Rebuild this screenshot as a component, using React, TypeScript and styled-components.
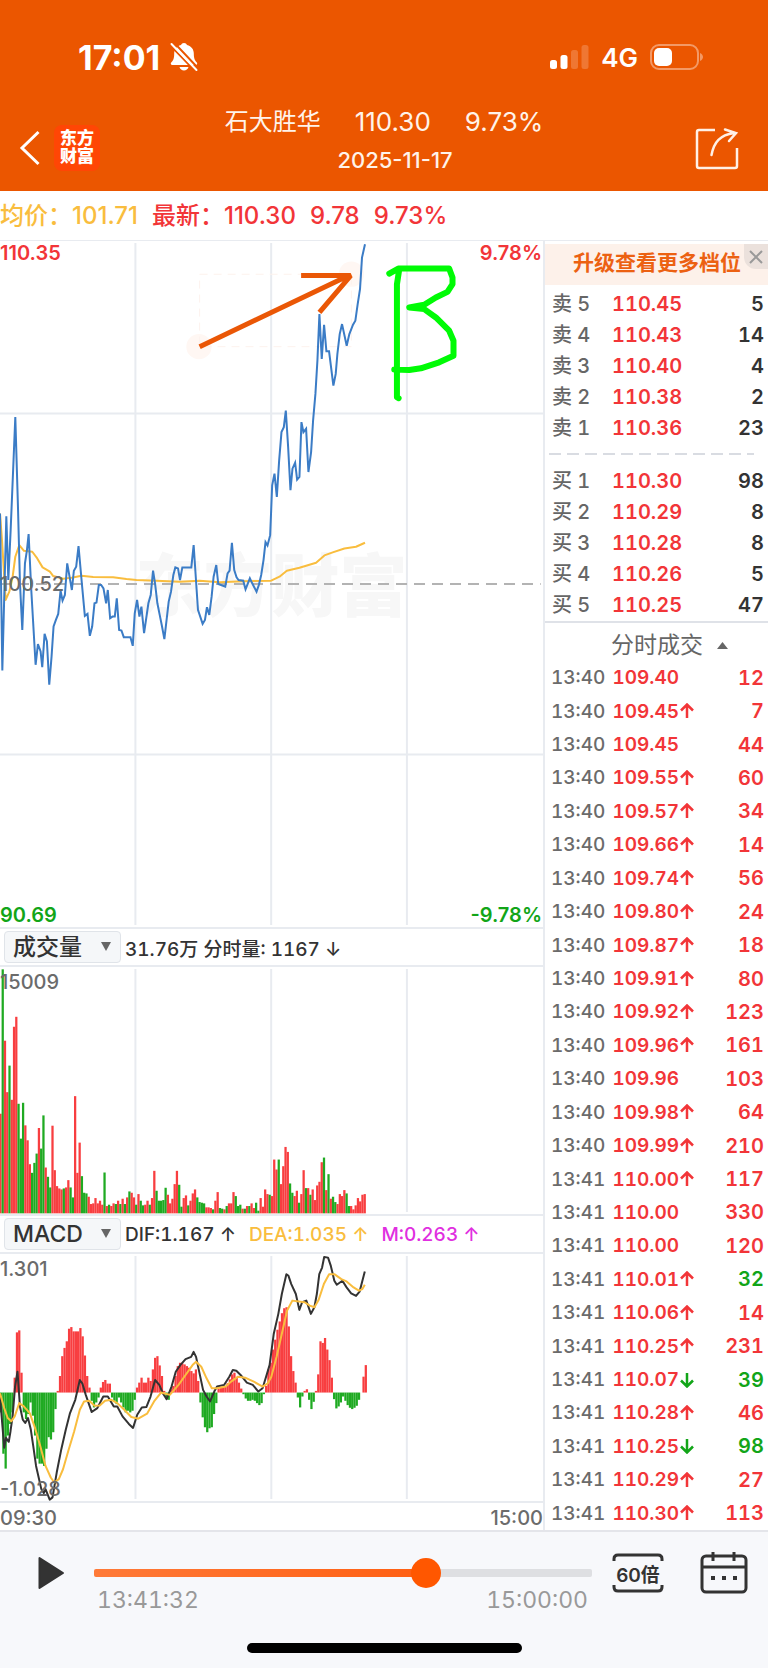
import React, { useState } from "react";
import styled, { createGlobalStyle } from "styled-components";

const GlobalStyle = createGlobalStyle`
  *, *::before, *::after { box-sizing: border-box; }
  body {
    margin: 0;
    background: #fff;
    color: #333;
    font-family: Inter, "Noto Sans CJK SC", sans-serif;
  }
  button, select { font: inherit; color: inherit; }
  button { display: flex; padding: 0; border: 0; background: none; cursor: pointer; }
`;

const RED = "#f23538";
const GREEN = "#12a518";
const YELLOW = "#f9bd3e";
const LINE = "#e8ebf0";

const Page = styled.div`
  display: flex;
  flex-direction: column;
  min-height: 100vh;
`;

/* ---------- header ---------- */

const Header = styled.header`
  padding-top: 36px;
  background: #eb5600;
  color: #fff;
`;

const StatusBar = styled.div`
  display: flex;
  align-items: center;
  justify-content: space-between;
  height: 42px;
  padding: 0 64px 0 78px;
`;

const StatusGroup = styled.div`
  display: flex;
  align-items: center;
  gap: 12px;
`;

const Clock = styled.span`
  display: flex;
  align-items: center;
  gap: 10px;
  font-size: 34px;
  font-weight: 700;
`;

const Network = styled.span`
  font-size: 26px;
  font-weight: 600;
`;

const NavBar = styled.div`
  display: grid;
  grid-template-columns: 1fr auto 1fr;
  align-items: center;
  height: 113px;
  padding: 0 29px 0 18px;
`;

const NavStart = styled.div`
  display: flex;
  align-items: center;
  gap: 12px;
  padding-top: 26px;
`;

const NavEnd = styled.div`
  display: flex;
  justify-content: flex-end;
  padding-top: 26px;
`;

const AppLogo = styled.span`
  width: 46px;
  height: 46px;
  padding-top: 4px;
  border-radius: 8px;
  background: #ff4605;
  font-size: 17px;
  font-weight: 900;
  line-height: 18px;
  text-align: center;
`;

const Titles = styled.div`
  display: flex;
  flex-direction: column;
  align-items: center;
  gap: 8px;
  padding: 10px 0 0 11px;
`;

const StockTitle = styled.h1`
  display: flex;
  gap: 34px;
  margin: 0;
  color: #fff3ea;
  font-size: 26px;
  font-weight: 400;
  line-height: 32px;
`;

const StockName = styled.span`
  font-size: 24px;
`;

const TradeDate = styled.div`
  padding-left: 22px;
  color: #fff3ea;
  font-size: 22px;
  font-weight: 500;
  line-height: 28px;
`;

/* ---------- quote summary ---------- */

const Summary = styled.div`
  display: flex;
  gap: 14px;
  height: 49px;
  color: ${RED};
  font-size: 24px;
  font-weight: 500;
  line-height: 49px;
`;

const Average = styled.span`
  color: ${YELLOW};
`;

/* ---------- body ---------- */

const Body = styled.main`
  display: flex;
  border-top: 1px solid ${LINE};
  border-bottom: 2px solid #e4e5ea;
`;

const Charts = styled.section`
  display: flex;
  flex: 1;
  flex-direction: column;
  min-width: 0;
`;

const Plot = styled.div<{ $height: number }>`
  position: relative;
  height: ${(p) => p.$height}px;
  border-bottom: 2px solid ${LINE};
`;

const Drawing = styled.svg`
  display: block;
  position: relative;
  width: 100%;
  height: 100%;
  overflow: hidden;

  path, line, rect, polyline { vector-effect: non-scaling-stroke; }
`;

const ScaleLabel = styled.span<{ $tone?: string; $right?: boolean; $at: string }>`
  position: absolute;
  ${(p) => (p.$right ? "right: 1px;" : "left: 0;")}
  ${(p) => p.$at};
  color: ${(p) => p.$tone ?? "#6b6b6b"};
  font-size: 20px;
  font-weight: ${(p) => (p.$tone ? 600 : 500)};
  line-height: 24px;
`;

const Watermark = styled.span`
  position: absolute;
  top: 50%;
  left: 0;
  width: 100%;
  color: #f7f7f7;
  font-size: 68px;
  font-weight: 900;
  line-height: 80px;
  text-align: center;
  margin-top: -38px;
`;

const IndicatorBar = styled.div`
  display: flex;
  align-items: center;
  gap: 4px;
  height: 38px;
  padding-left: 4px;
  border-bottom: 2px solid ${LINE};
`;

const Picker = styled.label`
  display: block;
  position: relative;
  width: 117px;
  height: 32px;
  color: #666;
`;

const PickerSelect = styled.select`
  width: 100%;
  height: 100%;
  padding: 0 0 0 8px;
  border: 1px solid #e0e4e9;
  border-radius: 4px;
  background: #f5f7f9;
  color: #333;
  font-size: 23px;
  font-weight: 500;
  appearance: none;
`;

const PickerArrow = styled.svg`
  position: absolute;
  top: 11px;
  right: 10px;
  pointer-events: none;
`;

const Readings = styled.div`
  display: flex;
  gap: 13px;
  font-size: 19px;
  font-variant-numeric: tabular-nums;
  font-weight: 500;
`;

const Reading = styled.span<{ $tone?: string }>`
  color: ${(p) => p.$tone ?? "#333"};
`;

const TimeAxis = styled.div`
  display: flex;
  justify-content: space-between;
  height: 27px;
  color: #6b6b6b;
  font-size: 20px;
  font-weight: 500;
  line-height: 31px;
`;

/* ---------- order book ---------- */

const Side = styled.aside`
  display: flex;
  flex: none;
  flex-direction: column;
  width: 225px;
  border-left: 2px solid ${LINE};
`;

const Banner = styled.div`
  position: relative;
  margin-top: 3px;
  height: 41px;
  background: #fdf1ea;
  color: #ec6112;
`;

const BannerLink = styled.a`
  display: block;
  padding-left: 28px;
  color: inherit;
  font-size: 21px;
  font-weight: 600;
  line-height: 38px;
  text-decoration: none;
`;

const CloseButton = styled.button`
  position: absolute;
  top: 0;
  right: 0;
  align-items: center;
  justify-content: center;
  width: 24px;
  height: 25px;
  border-bottom-left-radius: 12px;
  background: #ebe1dc;
  color: #999;
`;

const DataTable = styled.table`
  display: block;
  width: 100%;
  font-size: 20px;
  font-variant-numeric: tabular-nums;
  font-weight: 600;

  tbody { display: flex; flex-direction: column; }
`;

const DepthTable = styled(DataTable)`
  padding: 4px 4px 0 7px;
`;

const DepthRow = styled.tr`
  display: flex;
  height: 31px;
  line-height: 31px;

  th { width: 60px; padding: 0; color: #666; font-weight: 500; text-align: left; }
  td { padding: 0; }
  td:last-child { flex: 1; color: #333; text-align: right; }
`;

const Price = styled.td`
  color: ${RED};
`;

const Divider = styled.svg`
  display: block;
  width: 100%;
  height: 18px;
  padding: 0 14px 0 4px;
`;

const TicksTitle = styled.button`
  align-items: center;
  justify-content: center;
  gap: 14px;
  height: 40px;
  padding: 6px 0 0 26px;
  border-top: 2px solid #dfe2e8;
  color: #666;
  font-size: 23px;
  line-height: 30px;
`;

const TickTable = styled(DataTable)`
  display: flex;
  flex: 1;
  flex-direction: column;
  padding: 0 4px 0 6px;

  tbody { flex: 1; }
`;

const TickRow = styled.tr`
  display: flex;
  flex: 1;
  align-items: center;
  min-height: 24px;

  th, td { padding: 0; }
  th { width: 57px; color: #6b6b6b; font-size: 19px; font-weight: 500; text-align: left; }
`;

const TickPrice = styled.td`
  display: flex;
  justify-content: flex-end;
  width: 71px;
  color: ${RED};
  font-size: 19px;
`;

const TickArrow = styled.td<{ $down?: boolean }>`
  display: flex;
  width: 16px;
  color: ${(p) => (p.$down ? GREEN : RED)};
`;

const TickVolume = styled.td<{ $sell?: boolean }>`
  flex: 1;
  color: ${(p) => (p.$sell ? GREEN : RED)};
  text-align: right;
`;

/* ---------- playback ---------- */

const Player = styled.footer`
  display: flex;
  flex: 1;
  flex-direction: column;
  align-items: center;
  justify-content: space-between;
  padding: 20px 20px 15px 38px;
  background: #f7f8fb;
`;

const Controls = styled.div`
  display: flex;
  gap: 20px;
  width: 100%;
`;

const PlayButton = styled.button`
  align-items: center;
  width: 36px;
  height: 42px;
  color: #333;
`;

const Timeline = styled.div`
  flex: 1;
  min-width: 0;
`;

const Scrubber = styled.input<{ $progress: number }>`
  display: block;
  width: 100%;
  height: 42px;
  margin: 0;
  background: none;
  appearance: none;

  &::-webkit-slider-runnable-track {
    height: 8px;
    border-radius: 2px;
    background: linear-gradient(90deg, #ff7a38, #ff5f12) 0 0 / ${(p) => p.$progress}% 100% no-repeat, #dedfe2;
  }
  &::-webkit-slider-thumb {
    width: 30px;
    height: 30px;
    margin-top: -11px;
    border-radius: 50%;
    background: #ff5700;
    appearance: none;
  }
`;

const TimeRange = styled.div`
  display: flex;
  justify-content: space-between;
  padding: 0 4px 0 3px;
  color: #999;
  font-size: 23px;
  font-variant-numeric: tabular-nums;
  line-height: 28px;
  margin-top: -8px;
`;

const Tools = styled.div`
  display: flex;
  gap: 36px;
  height: 42px;
  align-items: center;
`;

const SpeedButton = styled.button`
  position: relative;
  align-items: center;
  justify-content: center;
  width: 52px;
  height: 40px;
  font-size: 19px;
  font-weight: 600;

  svg { position: absolute; top: 0; left: 0; }
`;

const HomeIndicator = styled.div`
  width: 275px;
  height: 10px;
  margin-right: 18px;
  border-radius: 5px;
  background: #000;
`;

/* ---------- data ---------- */

const priceLine =
  "0,850 7,1322 19,858 25,1050 32,900 46,560 54,830 60,1060 67,1200 75,1000 81,960 86,912 94,1080 107,1305 114,1243 122,1265 127,1312 134,1212 141,1235 148,1365 155,1280 161,1190 168,1170 175,1152 182,1082 188,1112 195,1095 202,1000 209,1040 216,1080 222,1022 229,1010 236,948 246,1060 255,1158 263,1152 270,1218 277,1190 284,1120 290,1118 297,1065 304,1065 311,1075 319,1120 324,1080 331,1165 338,1160 345,1160 351,1105 358,1200 365,1202 372,1222 392,1222 399,1248 405,1150 412,1110 419,1160 425,1130 433,1210 446,1120 453,1095 460,1022 466,1060 473,1120 480,1155 487,1190 494,1228 507,1115 514,1085 521,1035 527,1012 535,1015 541,1050 548,1012 575,1012 582,945 589,1050 595,1140 609,1182 616,1170 622,1132 629,1155 636,1100 642,1040 650,1005 656,1062 677,1070 684,1030 690,1022 697,938 704,1020 711,1042 717,1050 731,1052 738,1078 751,1045 758,1060 771,1085 778,1065 785,1035 792,990 798,936 804,946 812,915 818,765 825,730 832,800 839,690 846,605 853,590 859,540 866,650 873,780 879,715 887,697 893,748 900,740 906,575 912,605 920,595 927,725 935,665 941,570 948,490 954,390 960,250 967,385 974,282 981,362 989,362 1002,465 1009,430 1014,370 1021,310 1028,280 1042,345 1050,310 1061,282 1068,270 1075,220 1082,175 1088,80 1097,40";

const averageLine =
  "0,850 6,930 17,1110 28,1085 38,1040 46,980 58,945 72,962 97,965 112,985 128,1012 150,1025 160,1038 190,1046 215,1043 245,1037 280,1041 340,1042 380,1047 410,1050 470,1052 540,1055 600,1052 660,1057 730,1054 815,1052 840,1040 862,1022 900,1013 950,998 975,976 1000,967 1035,955 1070,950 1097,938";

const difLine =
  "0,560 12,715 17,685 25,697 30,665 36,620 43,530 50,485 57,590 65,630 72,640 80,625 88,660 95,710 103,770 118,840 125,852 130,840 142,872 150,865 162,790 175,720 188,660 200,610 215,570 228,510 235,520 245,555 262,607 278,595 295,560 308,560 325,590 335,590 350,620 368,643 380,655 392,615 405,593 418,592 430,560 443,510 455,525 465,550 476,568 490,530 502,485 515,465 530,447 546,440 553,425 560,440 570,490 580,540 590,560 600,575 612,545 620,530 640,525 655,500 665,480 675,482 690,498 705,518 722,525 738,545 750,535 760,500 770,465 782,370 795,310 805,250 818,190 824,195 832,220 845,250 855,298 863,275 875,270 888,310 898,290 905,250 912,190 920,170 926,138 937,140 945,165 955,210 962,222 978,210 990,230 1003,248 1017,256 1027,243 1042,182";

const deaLine =
  "0,550 12,595 22,625 32,635 42,620 55,580 68,590 85,610 100,655 115,710 130,770 145,805 155,820 168,810 180,780 195,725 212,665 228,600 240,575 255,573 270,588 285,587 300,573 318,570 335,580 355,600 375,622 395,627 420,612 440,575 460,548 485,555 510,525 530,495 550,465 560,455 575,470 590,505 605,535 620,535 645,530 660,515 680,500 700,503 725,515 750,530 765,520 775,500 790,440 805,370 820,300 835,270 870,275 885,285 898,290 910,268 925,220 940,190 955,190 975,205 990,212 1010,230 1025,240 1035,235 1042,222";

/* one value per minute; negative means the price fell in that minute */
const volumes = [
  300, -735, 520, 365, -445, 342, 562, 592, -330, -225, -333, 265, 220, 148, -122, -152, -180, 257, -195, -295,
  138, -110, -78, 264, 130, 82, 75, 72, -75, 78, 100, -78, -48, 353, 122, 213, -112, -62, -60, 50,
  28, 30, 46, 30, 38, 26, -123, 22, -26, 22, 30, -28, 38, -28, 44, -28, 48, -66, 62, 48,
  -26, 58, -38, -24, 26, 38, -26, 46, 128, -68, -38, -38, -40, -77, 56, 30, 44, 88, 128, -86,
  -20, 46, 54, -24, 38, 60, 72, -48, -34, -32, -30, 18, 18, 16, -12, 38, 64, -16, -14, 12,
  -22, 30, 30, 64, -52, -22, -26, 14, -14, 22, -22, 30, 16, -32, -8, 46, 20, 72, 58, -56,
  52, 162, 132, -162, 88, 142, 200, 185, -90, -62, 52, 68, -32, 58, 130, -76, 76, -56, 72, 40,
  84, 95, 154, -168, 70, -118, 44, -50, -34, 28, 58, 52, 70, -60, -22, 22, 12, 24, 46, 36,
  56, 58,
];

const macdBars = [
  -60, -185, -230, -130, -95, -60, 45, 182, 188, 60, -60, -80, -65, -30, -70, -130, -200, -215, -215, -222,
  -170, -135, -142, -120, -50, 5, 50, 110, 135, 155, 193, 198, 185, 185, 185, 195, 170, 112, 50, 15,
  -25, -45, -30, -15, 15, 32, 38, 27, 27, -15, -25, -35, -15, -30, -45, -60, -55, -60, -55, -22,
  15, 30, 45, 30, 30, 45, 35, 70, 105, 110, 82, 50, 5, -20, -22, 10, 20, 50, 80, 90,
  88, 85, 80, 75, 65, 58, 70, 35, -30, -75, -105, -120, -108, -105, -65, -32, 12, 15, 18, 20,
  28, 40, 55, 60, 45, 30, 12, -5, -18, -25, -25, -22, -25, -32, -38, -32, -5, 20, 70, 90,
  130, 160, 190, 215, 240, 255, 258, 200, 110, 65, 30, -15, -45, -12, 5, 10, -22, -50, -28, 5,
  55, 155, 150, 165, 130, 98, 45, -20, -48, -42, -30, -12, -25, -38, -46, -50, -46, -40, -22, 0,
  48, 83,
];

type Level = [label: string, price: string, volume: number];

const asks: Level[] = [
  ["卖 5", "110.45", 5],
  ["卖 4", "110.43", 14],
  ["卖 3", "110.40", 4],
  ["卖 2", "110.38", 2],
  ["卖 1", "110.36", 23],
];

const bids: Level[] = [
  ["买 1", "110.30", 98],
  ["买 2", "110.29", 8],
  ["买 3", "110.28", 8],
  ["买 4", "110.26", 5],
  ["买 5", "110.25", 47],
];

type Tick = [time: string, price: string, move: "" | "up" | "down", volume: number, sell?: boolean];

const ticks: Tick[] = [
  ["13:40", "109.40", "", 12],
  ["13:40", "109.45", "up", 7],
  ["13:40", "109.45", "", 44],
  ["13:40", "109.55", "up", 60],
  ["13:40", "109.57", "up", 34],
  ["13:40", "109.66", "up", 14],
  ["13:40", "109.74", "up", 56],
  ["13:40", "109.80", "up", 24],
  ["13:40", "109.87", "up", 18],
  ["13:40", "109.91", "up", 80],
  ["13:40", "109.92", "up", 123],
  ["13:40", "109.96", "up", 161],
  ["13:40", "109.96", "", 103],
  ["13:40", "109.98", "up", 64],
  ["13:40", "109.99", "up", 210],
  ["13:41", "110.00", "up", 117],
  ["13:41", "110.00", "", 330],
  ["13:41", "110.00", "", 120],
  ["13:41", "110.01", "up", 32, true],
  ["13:41", "110.06", "up", 14],
  ["13:41", "110.25", "up", 231],
  ["13:41", "110.07", "down", 39, true],
  ["13:41", "110.28", "up", 46],
  ["13:41", "110.25", "down", 98, true],
  ["13:41", "110.29", "up", 27],
  ["13:41", "110.30", "up", 113],
];

/* ---------- icons ---------- */

const BellOff = () => (
  <svg width="28" height="30" viewBox="0 0 28 30" aria-hidden="true">
    <path
      fill="#fff"
      d="M14 1c1.500 0 2.500.8 3 2 4.500 1.200 6.800 4.400 6.800 8.600 0 5 1 7 3 9 .8.900.4 2.400-1 2.400H2.200c-1.400 0-1.800-1.500-1-2.400 2-2 3-4 3-9C4.200 7.400 6.500 4.200 11 3c.5-1.200 1.500-2 3-2zM9.500 25h9c-.6 2.300-2.300 3.500-4.500 3.500s-3.900-1.200-4.500-3.500z"
    />
    <path d="M0 3 26 30M3.500 0 29 27" stroke="#eb5600" strokeWidth="2" />
    <path d="M1.500 2 26.500 28" stroke="#fff" strokeWidth="2" strokeLinecap="round" />
  </svg>
);

const Signal = () => (
  <svg width="39" height="25" viewBox="0 0 39 25" fill="#fff" aria-hidden="true">
    <rect x="0" y="15" width="7" height="9" rx="2.500" />
    <rect x="10.500" y="10" width="7" height="14" rx="2.500" />
    <rect x="21" y="5" width="7" height="19" rx="2.500" opacity="0.2" />
    <rect x="31.500" y="0" width="7" height="24" rx="2.500" opacity="0.2" />
  </svg>
);

const Battery = () => (
  <svg width="54" height="26" viewBox="0 0 54 26" aria-hidden="true">
    <rect x="1" y="1" width="47" height="24" rx="8" fill="none" stroke="#fff" strokeOpacity="0.4" strokeWidth="2" />
    <rect x="4" y="4" width="18" height="18" rx="5" fill="#fff" />
    <path d="M50 9c2 1 3 2.500 3 4s-1 3-3 4z" fill="#fff" opacity="0.4" />
  </svg>
);

const BackIcon = () => (
  <svg width="24" height="36" viewBox="0 0 24 36" fill="none" stroke="#fff" strokeWidth="3" aria-hidden="true">
    <path d="M20.500 2 4 18l16.500 16" />
  </svg>
);

const ShareIcon = () => (
  <svg width="44" height="44" viewBox="0 0 44 44" fill="none" stroke="#fff0e6" strokeWidth="2.500" aria-hidden="true">
    <path d="M20 4H4Q2 4 2 6v34Q2 42 4 42h36q2 0 2-2V22" />
    <path d="M16.500 29C19 16 25 9 39 7M30 3.500l11 3.500-7 8" strokeLinecap="round" />
  </svg>
);

const Arrow = ({ down }: { down?: boolean }) => (
  <svg
    width="16"
    height="16"
    viewBox="0 0 16 16"
    fill="none"
    stroke="currentColor"
    strokeWidth="2.500"
    role="img"
    aria-label={down ? "down" : "up"}
  >
    <path d={down ? "M8 1v13M2 8.500l6 6 6-6" : "M8 15V2M2 7.500l6-6 6 6"} />
  </svg>
);

const CalendarIcon = () => (
  <svg width="48" height="42" viewBox="0 0 48 42" fill="none" stroke="#333" strokeWidth="3" aria-hidden="true">
    <rect x="2" y="4" width="44" height="36" rx="4" />
    <path d="M2 15h44M13 0v9M34 0v9" />
    <path d="M11 26h4M22 26h4M33 26h4" strokeWidth="4" />
  </svg>
);

/* ---------- charts ---------- */

const Grid = ({ columns, top, height }: { columns: number[]; top: number; height: number }) => (
  <g stroke={LINE} strokeWidth="2">
    {columns.map((x) => (
      <line key={x} x1={x} x2={x} y1={top + 6} y2={top + height - 6} />
    ))}
  </g>
);

const PriceChart = () => (
  <Drawing viewBox="0 30 1632 2064" preserveAspectRatio="none" role="img" aria-label="分时走势">
    <Grid columns={[407, 815, 1223]} top={30} height={2064} />
    <g stroke={LINE} strokeWidth="2">
      <line x1="0" x2="1632" y1="549" y2="549" />
      <line x1="0" x2="1632" y1="1575" y2="1575" />
    </g>
    <line x1="0" x2="1625" y1="1062" y2="1062" stroke="#b3b3b3" strokeWidth="2" strokeDasharray="11 7" />
    <g fill="#fff7f3">
      <circle cx="598" cy="348" r="38" />
      <circle cx="1056" cy="130" r="38" />
    </g>
    <rect x="600" y="130" width="456" height="218" fill="none" stroke="#fdf2ed" strokeWidth="1" strokeDasharray="8 6" />
    <polyline points={averageLine} fill="none" stroke={YELLOW} strokeWidth="2" strokeLinejoin="round" />
    <polyline points={priceLine} fill="none" stroke="#3b7cc6" strokeWidth="2" />
    <path d="M600 348 1050 133M905 134H1054L960 245" fill="none" stroke="#ea5706" strokeWidth="5" strokeLinejoin="bevel" />
    <path
      d="M1170 128 1197 113H1350L1360 140V160L1345 183 1310 200 1275 222 1230 230 1275 235 1310 260 1350 300 1363 330V375L1320 395 1265 413 1230 418 1185 417M1200 115 1193 160V500L1198 503"
      fill="none"
      stroke="#00fb05"
      strokeWidth="6"
      strokeLinecap="round"
      strokeLinejoin="round"
    />
  </Drawing>
);

const Bar = ({ x, y, width, value }: { x: number; y: number; width: number; value: number }) => (
  <rect x={x} y={y} width={width} height={Math.abs(value)} fill={value < 0 ? "#1faa22" : "#f83e40"} />
);

const VolumeChart = () => (
  <Drawing viewBox="0 201 1632 744" preserveAspectRatio="none" role="img" aria-label="成交量">
    <Grid columns={[407, 815, 1223]} top={201} height={744} />
    {volumes.map((v, i) => (
      <Bar key={i} x={i * 6.8 - 2} y={943 - Math.abs(v)} width={6.8} value={v} />
    ))}
  </Drawing>
);

const MacdChart = () => (
  <Drawing viewBox="0 129 1551 747" preserveAspectRatio="none" role="img" aria-label="MACD">
    <Grid columns={[387, 775, 1162]} top={129} height={747} />
    {macdBars.map((v, i) => (
      <Bar key={i} x={i * 6.47} y={v > 0 ? 548 - v : 548} width={6.47} value={v} />
    ))}
    <polyline points={difLine} fill="none" stroke="#333" strokeWidth="2" strokeLinejoin="round" />
    <polyline points={deaLine} fill="none" stroke={YELLOW} strokeWidth="2" strokeLinejoin="round" />
  </Drawing>
);

const IndicatorPicker = ({ label, options }: { label: string; options: string[] }) => (
  <Picker>
    <PickerSelect aria-label={label} defaultValue={options[0]}>
      {options.map((o) => (
        <option key={o}>{o}</option>
      ))}
    </PickerSelect>
    <PickerArrow width="10" height="9" viewBox="0 0 10 9" aria-hidden="true">
      <path d="M0 0h10L5 9z" fill="#666" />
    </PickerArrow>
  </Picker>
);

const DepthLevels = ({ levels }: { levels: Level[] }) => (
  <DepthTable>
    <tbody>
      {levels.map(([label, price, volume]) => (
        <DepthRow key={label}>
          <th scope="row">{label}</th>
          <Price>{price}</Price>
          <td>{volume}</td>
        </DepthRow>
      ))}
    </tbody>
  </DepthTable>
);

const SESSION = 14400;

export default function App() {
  const [position, setPosition] = useState(9750);

  return (
    <Page>
      <GlobalStyle />
      <Header>
        <StatusBar>
          <Clock>
            17:01
            <BellOff />
          </Clock>
          <StatusGroup>
            <Signal />
            <Network>4G</Network>
            <Battery />
          </StatusGroup>
        </StatusBar>
        <NavBar>
          <NavStart>
            <button aria-label="返回">
              <BackIcon />
            </button>
            <AppLogo>
              东方
              <br />
              财富
            </AppLogo>
          </NavStart>
          <Titles>
            <StockTitle>
              <StockName>石大胜华</StockName>
              <span>110.30</span>
              <span>9.73%</span>
            </StockTitle>
            <TradeDate>2025-11-17</TradeDate>
          </Titles>
          <NavEnd>
            <button aria-label="分享">
              <ShareIcon />
            </button>
          </NavEnd>
        </NavBar>
      </Header>

      <Summary>
        <Average>均价：101.71</Average>
        <span>最新：110.30</span>
        <span>9.78</span>
        <span>9.73%</span>
      </Summary>

      <Body>
        <Charts>
          <Plot $height={688}>
            <Watermark aria-hidden="true">东方财富</Watermark>
            <PriceChart />
            <ScaleLabel $at="top: 0" $tone={RED}>110.35</ScaleLabel>
            <ScaleLabel $at="top: 0" $tone={RED} $right>9.78%</ScaleLabel>
            <ScaleLabel $at="top: calc(50% - 12px)">100.52</ScaleLabel>
            <ScaleLabel $at="bottom: 0" $tone={GREEN}>90.69</ScaleLabel>
            <ScaleLabel $at="bottom: 0" $tone={GREEN} $right>-9.78%</ScaleLabel>
          </Plot>
          <IndicatorBar>
            <IndicatorPicker label="副图指标一" options={["成交量", "MACD"]} />
            <Readings>
              <Reading>31.76万 分时量: 1167 ↓</Reading>
            </Readings>
          </IndicatorBar>
          <Plot $height={249}>
            <VolumeChart />
            <ScaleLabel $at="top: 3px">15009</ScaleLabel>
          </Plot>
          <IndicatorBar>
            <IndicatorPicker label="副图指标二" options={["MACD", "成交量"]} />
            <Readings>
              <Reading>DIF:1.167 ↑</Reading>
              <Reading $tone={YELLOW}>DEA:1.035 ↑</Reading>
              <Reading $tone="#e02fe0">M:0.263 ↑</Reading>
            </Readings>
          </IndicatorBar>
          <Plot $height={249}>
            <MacdChart />
            <ScaleLabel $at="top: 3px">1.301</ScaleLabel>
            <ScaleLabel $at="bottom: 0">-1.028</ScaleLabel>
          </Plot>
          <TimeAxis>
            <span>09:30</span>
            <span>15:00</span>
          </TimeAxis>
        </Charts>

        <Side>
          <Banner>
            <BannerLink href="#upgrade">升级查看更多档位</BannerLink>
            <CloseButton aria-label="关闭">
              <svg width="14" height="14" viewBox="0 0 14 14" fill="none" stroke="currentColor" strokeWidth="2" aria-hidden="true">
                <path d="M1 1l12 12M13 1 1 13" />
              </svg>
            </CloseButton>
          </Banner>
          <DepthLevels levels={asks} />
          <Divider aria-hidden="true">
            <line x1="0" x2="100%" y1="10" y2="10" stroke="#d9dce2" strokeWidth="2" strokeDasharray="12 6" />
          </Divider>
          <DepthLevels levels={bids} />
          <TicksTitle>
            分时成交
            <svg width="11" height="7" viewBox="0 0 11 7" aria-hidden="true">
              <path d="M0 7h11L5.500 0z" fill="#666" />
            </svg>
          </TicksTitle>
          <TickTable>
            <tbody>
              {ticks.map(([time, price, move, volume, sell], i) => (
                <TickRow key={i}>
                  <th scope="row">{time}</th>
                  <TickPrice>{price}</TickPrice>
                  <TickArrow $down={move === "down"}>{move && <Arrow down={move === "down"} />}</TickArrow>
                  <TickVolume $sell={sell}>{volume}</TickVolume>
                </TickRow>
              ))}
            </tbody>
          </TickTable>
        </Side>
      </Body>

      <Player>
        <Controls>
          <PlayButton aria-label="播放">
            <svg width="27" height="34" viewBox="0 0 27 34" aria-hidden="true">
              <path d="M1.500 2v30L25 17z" fill="#333" stroke="#333" strokeWidth="2" strokeLinejoin="round" />
            </svg>
          </PlayButton>
          <Timeline>
            <Scrubber
              type="range"
              aria-label="回放进度"
              min={0}
              max={SESSION}
              value={position}
              onChange={(e) => setPosition(Number(e.target.value))}
              $progress={(position / SESSION) * 100}
            />
            <TimeRange>
              <span>13:41:32</span>
              <span>15:00:00</span>
            </TimeRange>
          </Timeline>
          <Tools>
            <SpeedButton>
              <svg width="52" height="40" viewBox="0 0 52 40" fill="none" stroke="#333" strokeWidth="3" aria-hidden="true">
                <path d="M2 8V6q0-4 4-4h40q4 0 4 4v2M2 32v2q0 4 4 4h40q4 0 4-4v-2" />
              </svg>
              60倍
            </SpeedButton>
            <button aria-label="选择日期">
              <CalendarIcon />
            </button>
          </Tools>
        </Controls>
        <HomeIndicator />
      </Player>
    </Page>
  );
}
